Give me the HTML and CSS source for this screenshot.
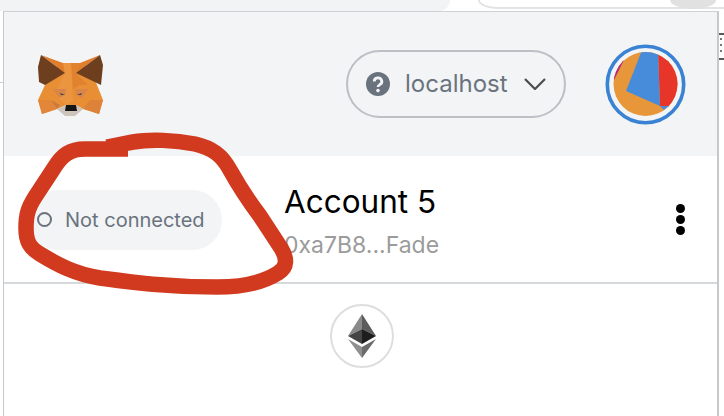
FILE: index.html
```html
<!DOCTYPE html>
<html lang="en">
<head>
<meta charset="utf-8">
<title>MetaMask</title>
<link rel="stylesheet" href="styles.css">
</head>
<body>
<div class="chrome" aria-hidden="true">
  <div class="chrome-tab"></div>
  <div class="chrome-bar"></div>
  <div class="chrome-btn"></div>
  <div class="chrome-grip"></div>
  <div class="chrome-dots"></div>
  <div class="chrome-line"></div>
</div>
<main class="popup">
  <header class="header">
    <svg class="fox" viewBox="36 50 70 66" aria-label="MetaMask">
      <polygon fill="#e88f35" points="45,83 50,70 63,61 80,61 92,70 97,83 103,98 99,112 83,107 76,103 66,103 57,107 42,112 38,98"/>
      <polygon fill="#e27d2a" points="41,53 63,61 65,71"/>
      <polygon fill="#e27d2a" points="100,53 80,61 76,71"/>
      <polygon fill="#e0822f" points="80,61 76,71 88,83 79,83 73,87 71,61"/>
      <polygon fill="#ec9540" points="63,61 71,61 72,87 73,99 66,103 58,96 57,88 65,71"/>
      <polygon fill="#d98549" points="53,87 66,87 65,93 59,96"/>
      <polygon fill="#d98549" points="88,87 75,87 76,93 82,96"/>
      <polygon fill="#c97a42" points="51,98 60,103 57,107"/>
      <polygon fill="#c97a42" points="90,98 84,105 83,107"/>
      <polygon fill="#e2863a" points="38,98 51,98 57,107 42,112"/>
      <polygon fill="#dd8238" points="103,98 90,98 84,107 99,112"/>
      <polygon fill="#6e3f1e" points="41,53 65,71 45,83 39,80 38,65"/>
      <polygon fill="#6e3f1e" points="100,53 76,71 101,83 103,63"/>
      <polygon fill="#cdc4bb" points="57,107 66,103 76,103 83,107 75,114 65,114"/>
      <polygon fill="#161616" points="66,103 76,103 77,109 65,109"/>
      <polygon fill="#2d4054" points="60,91 65,93 61,93"/>
      <polygon fill="#2d4054" points="82,91 77,93 81,93"/>
    </svg>
    <button class="network" type="button">
      <svg class="network-icon" viewBox="0 0 24 24" aria-hidden="true">
        <circle cx="12" cy="12" r="12" fill="#6a737d"/>
        <path d="M8.2 9.4a3.8 3.6 0 1 1 5.6 3.2c-1.2.7-1.8 1.2-1.8 2.4" fill="none" stroke="#f2f4f6" stroke-width="2.8"/>
        <circle cx="12" cy="18.6" r="1.8" fill="#f2f4f6"/>
      </svg>
      <span class="network-name">localhost</span>
      <svg class="chevron" viewBox="0 0 22 12" aria-hidden="true"><path d="M1 1l10 10L21 1" fill="none" stroke="#4d4d4d" stroke-width="2.2"/></svg>
    </button>
    <svg class="avatar" viewBox="606 44 81 81" aria-label="Account avatar">
      <defs><clipPath id="avatar-clip"><circle cx="646.5" cy="84" r="32"/></clipPath></defs>
      <g clip-path="url(#avatar-clip)">
        <rect x="606" y="44" width="81" height="81" fill="#e8963a"/>
        <polygon fill="#b5297a" points="610,70 630,55 625,60 615,80"/>
        <polygon fill="#e8352a" points="659,50 690,50 690,110 661,106"/>
        <polygon fill="#478bdb" points="643,50 659,52 661,106 670,106 665,110 661,106 627,91"/>
      </g>
      <circle cx="646.5" cy="84.5" r="38.2" fill="none" stroke="#3a83d4" stroke-width="3.6"/>
    </svg>
  </header>
  <section class="account">
    <div class="status">
      <span class="status-dot"></span>
      <span class="status-text">Not connected</span>
    </div>
    <div class="details">
      <div class="account-name">Account 5</div>
      <div class="account-address">0xa7B8...Fade</div>
    </div>
    <div class="menu" aria-label="Account options">
      <span class="menu-dot"></span><span class="menu-dot"></span><span class="menu-dot"></span>
    </div>
  </section>
  <section class="assets">
    <div class="token">
      <svg class="eth" viewBox="348 314 28 44" aria-label="Ethereum">
        <polygon fill="#8a8a8a" points="362,314 348,336 362,329"/>
        <polygon fill="#5c5c5c" points="362,314 376,336 362,329"/>
        <polygon fill="#454545" points="348,336 362,329 362,344"/>
        <polygon fill="#1e1e1e" points="376,336 362,329 362,344"/>
        <polygon fill="#8f8f8f" points="348,339 362,347 362,358"/>
        <polygon fill="#6b6b6b" points="376,339 362,347 362,358"/>
      </svg>
    </div>
  </section>
</main>
<svg class="scribble" viewBox="0 0 724 416" aria-hidden="true">
  <path d="M128 149 L85 149 C70 149 62 155 54 168 L35 197 C28 208 26 215 26 228 C26 242 30 248 40 254 C58 265 75 274 100 278 C130 282 165 287 217 287 C245 287 264 282 278 273 C288 267 287 258 281 248 L260 216 C248 200 240 188 230 170 C222 155 212 148 195 144 C175 140 150 139 133 142 L107 147" fill="none" stroke="#d13a1e" stroke-width="15.5"/>
</svg>
</body>
</html>
```
FILE: styles.css
```css
* { box-sizing: border-box; }
html, body { margin: 0; padding: 0; }
body {
  width: 724px;
  height: 416px;
  overflow: hidden;
  background: #fff;
  font-family: "Inter", "Noto Sans", sans-serif;
  position: relative;
}
.chrome { position: absolute; inset: 0; background: #fff; overflow: hidden; }
.chrome-tab { position: absolute; left: 0; top: 0; width: 450px; height: 11px; background: #f1f3f4; border-radius: 0 0 24px 0; }
.chrome-bar { position: absolute; left: 478px; top: 0; width: 246px; height: 9px; background: #fff; border-radius: 0 0 0 20px / 0 0 0 9px; border: 1px solid #e3e3e3; border-width: 0 0 2px 2px; }
.chrome-btn { position: absolute; left: 670px; top: 0; width: 46px; height: 9px; background: #e1e1e1; border-radius: 0 0 50% 50% / 0 0 100% 100%; }
.chrome-grip { position: absolute; left: 719px; top: 33px; width: 5px; height: 27px; border-top: 2px solid #5a5a5a; border-bottom: 2px solid #5a5a5a; }
.chrome-dots { position: absolute; left: 720px; top: 38px; width: 2px; height: 14px; background: repeating-linear-gradient(#777 0 2px, transparent 2px 6px); }
.chrome-line { position: absolute; left: 0; top: 82px; width: 3px; height: 1px; background: #ccc; }

.popup {
  position: relative;
  margin: 11px 0 0 3px;
  width: 716px;
  height: 405px;
  background: #fff;
  border-top: 1px solid #cfd1d4;
  border-left: 1px solid #c6c8cb;
  border-right: 2px solid #c6c8cb;
  display: flex;
  flex-direction: column;
}
.header {
  height: 144px;
  flex: none;
  background: #f2f4f6;
  display: flex;
  align-items: center;
  padding: 0 31px 0 32px;
}
.fox { width: 70px; height: 66px; flex: none; margin-top: 1px; }
.network {
  margin-left: auto;
  width: 220px;
  height: 68px;
  border: 2px solid #bbc0c5;
  border-radius: 34px;
  background: transparent;
  display: flex;
  align-items: center;
  padding: 0 18px;
  font: inherit;
  color: #6a737d;
}
.network-icon { width: 24px; height: 24px; flex: none; }
.network-name { margin-left: 15px; font-size: 24px; line-height: 1; }
.chevron { width: 22px; height: 12px; margin-left: auto; }
.avatar { width: 81px; height: 81px; flex: none; margin-left: 39px; }

.account {
  height: 128px;
  flex: none;
  display: flex;
  align-items: center;
  border-bottom: 2px solid #d6d9dc;
  padding: 0 31px 0 24px;
}
.status {
  width: 194px;
  height: 60px;
  margin-top: 1px;
  border-radius: 30px;
  background: #f2f4f6;
  display: flex;
  align-items: center;
  padding-left: 9px;
  flex: none;
}
.status-dot { width: 15px; height: 15px; border: 2px solid #6a737d; border-radius: 50%; flex: none; }
.status-text { margin-left: 13px; font-size: 20px; color: #6a737d; white-space: nowrap; }
.details { margin-left: 62px; display: flex; flex-direction: column; gap: 11px; margin-top: 5px; }
.account-name { font-size: 31.5px; line-height: 36px; color: #000; }
.account-address { font-size: 23px; line-height: 28px; color: #9b9b9b; }
.menu { margin-left: auto; display: flex; flex-direction: column; gap: 2px; margin-right: 1px; margin-top: 1px; }
.menu-dot { width: 9px; height: 9px; border-radius: 50%; background: #000; }

.assets { flex: 1; display: flex; justify-content: center; padding: 20px 0 0 2px; }
.token {
  width: 64px;
  height: 64px;
  border: 2px solid #dedede;
  border-radius: 50%;
  display: flex;
  align-items: center;
  justify-content: center;
  flex: none;
}
.eth { width: 28px; height: 44px; }
.scribble { position: absolute; left: 0; top: 0; width: 724px; height: 416px; pointer-events: none; }
```
